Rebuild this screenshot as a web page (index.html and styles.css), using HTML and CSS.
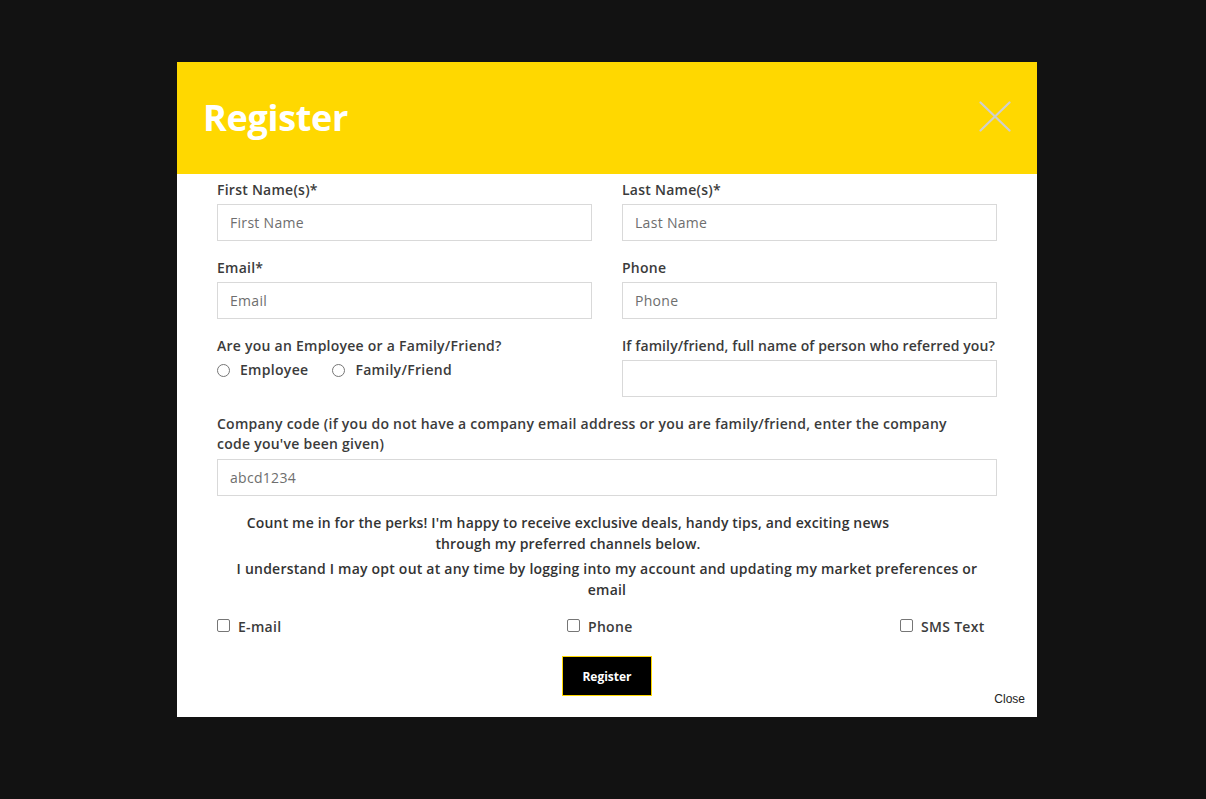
FILE: index.html
```
<!DOCTYPE html>
<html lang="en">
<head>
<meta charset="utf-8">
<title>Register</title>
<link rel="stylesheet" href="styles.css">
</head>
<body>
<div class="overlay">
  <div class="modal">
    <div class="modal-header">
      <h1 class="modal-title">Register</h1>
      <button class="close-x" aria-label="Close">
        <svg width="32" height="31" viewBox="0 0 32 31"><path d="M1.5 1.5 L30.5 29.5 M30.5 1.5 L1.5 29.5" stroke="#cfcfcf" stroke-width="2.2" stroke-linecap="round" fill="none"/></svg>
      </button>
    </div>
    <form class="modal-body">
      <div class="grid2">
        <div class="field">
          <label class="lbl">First Name(s)*</label>
          <input class="inp" type="text" placeholder="First Name">
        </div>
        <div class="field">
          <label class="lbl">Last Name(s)*</label>
          <input class="inp" type="text" placeholder="Last Name">
        </div>
        <div class="field">
          <label class="lbl">Email*</label>
          <input class="inp" type="text" placeholder="Email">
        </div>
        <div class="field">
          <label class="lbl">Phone</label>
          <input class="inp" type="text" placeholder="Phone">
        </div>
        <div class="field">
          <label class="lbl">Are you an Employee or a Family/Friend?</label>
          <div class="radios">
            <label class="opt"><span class="radio"></span>Employee</label>
            <label class="opt"><span class="radio"></span>Family/Friend</label>
          </div>
        </div>
        <div class="field">
          <label class="lbl lbl-tight">If family/friend, full name of person who referred you?</label>
          <input class="inp" type="text">
        </div>
      </div>
      <div class="field wide">
        <label class="lbl">Company code (if you do not have a company email address or you are family/friend, enter the company<br>code you've been given)</label>
        <input class="inp" type="text" placeholder="abcd1234">
      </div>
      <p class="consent consent-a">Count me in for the perks! I'm happy to receive exclusive deals, handy tips, and exciting news<br>through my preferred channels below.</p>
      <p class="consent consent-b">I understand I may opt out at any time by logging into my account and updating my market preferences or<br>email</p>
      <div class="checks">
        <label class="opt"><span class="box"></span>E-mail</label>
        <label class="opt"><span class="box"></span>Phone</label>
        <label class="opt"><span class="box"></span>SMS Text</label>
      </div>
      <div class="actions">
        <button type="button" class="btn-register">Register</button>
      </div>
      <div class="footer-close">Close</div>
    </form>
  </div>
</div>
</body>
</html>
```
FILE: styles.css
```
* { box-sizing: border-box; }
html, body { margin: 0; padding: 0; }
body {
  background: #121212;
  font-family: "Open Sans", "DejaVu Sans", sans-serif;
  width: 1206px;
  height: 799px;
  overflow: hidden;
}
.overlay {
  padding-top: 62px;
  padding-left: 177px;
  display: flex;
}
.modal {
  width: 860px;
  height: 655px;
  background: #fff;
}
.modal-header {
  height: 112px;
  background: #ffd800;
  display: flex;
  align-items: center;
  justify-content: space-between;
  padding: 0 26px 0 26px;
}
.modal-title {
  margin: 0;
  color: #fff;
  font-family: "Open Sans", sans-serif;
  font-weight: 700;
  font-size: 36px;
  letter-spacing: -0.3px;
  position: relative;
  top: -1px;
}
.close-x {
  background: none;
  border: 0;
  padding: 0;
  width: 32px;
  height: 31px;
  margin-top: -3px;
  cursor: pointer;
}
.close-x svg { display: block; }
.modal-body {
  padding: 6px 40px 0 40px;
  position: relative;
  height: 543px;
}
.grid2 {
  display: grid;
  grid-template-columns: 375px 375px;
  column-gap: 30px;
  row-gap: 17px;
}
.field { display: flex; flex-direction: column; }
.lbl {
  font-size: 14px;
  font-weight: 600;
  letter-spacing: 0.25px;
  color: #3b3b3b;
  line-height: 20px;
  margin-bottom: 4px;
}
.lbl-tight {
  white-space: nowrap;
  letter-spacing: 0.1px;
}
.inp {
  height: 37px;
  border: 1px solid #d9d9d9;
  padding: 0 12px;
  font-family: "Open Sans", sans-serif;
  font-size: 14px;
  letter-spacing: 0.3px;
  color: #555;
  outline: none;
}
.inp::placeholder { color: #6e6e6e; }
.radios {
  display: flex;
  gap: 24px;
  margin-top: 0px;
}
.opt {
  display: flex;
  align-items: center;
  font-size: 14px;
  font-weight: 600;
  letter-spacing: 0.3px;
  color: #3b3b3b;
  line-height: 20px;
}
.radio {
  width: 13px;
  height: 13px;
  border: 1px solid #767676;
  border-radius: 50%;
  margin-right: 10px;
  margin-top: 1px;
}
.box {
  width: 13px;
  height: 13px;
  border: 1px solid #767676;
  border-radius: 2px;
  margin-right: 8px;
  margin-top: -3px;
}
.wide { margin-top: 17px; }
.wide .lbl { margin-bottom: 5px; }
.consent {
  margin: 0;
  text-align: center;
  font-size: 14px;
  font-weight: 600;
  letter-spacing: 0.15px;
  color: #333;
  line-height: 21px;
}
.consent-a { margin-top: 16px; padding-right: 78px; }
.consent-b { margin-top: 4px; letter-spacing: 0.22px; }
.checks {
  display: grid;
  grid-template-columns: 350px 333px 1fr;
  margin-top: 17px;
}
.actions {
  display: flex;
  justify-content: center;
  margin-top: 19px;
}
.btn-register {
  width: 90px;
  height: 40px;
  background: #000;
  color: #fff;
  border: 1px solid #ffd800;
  font-family: "Open Sans", sans-serif;
  font-weight: 700;
  font-size: 12px;
  cursor: pointer;
}
.footer-close {
  position: absolute;
  right: 12px;
  bottom: 11px;
  font-family: "Liberation Sans", Arial, sans-serif;
  font-size: 12px;
  color: #222;
}
```
